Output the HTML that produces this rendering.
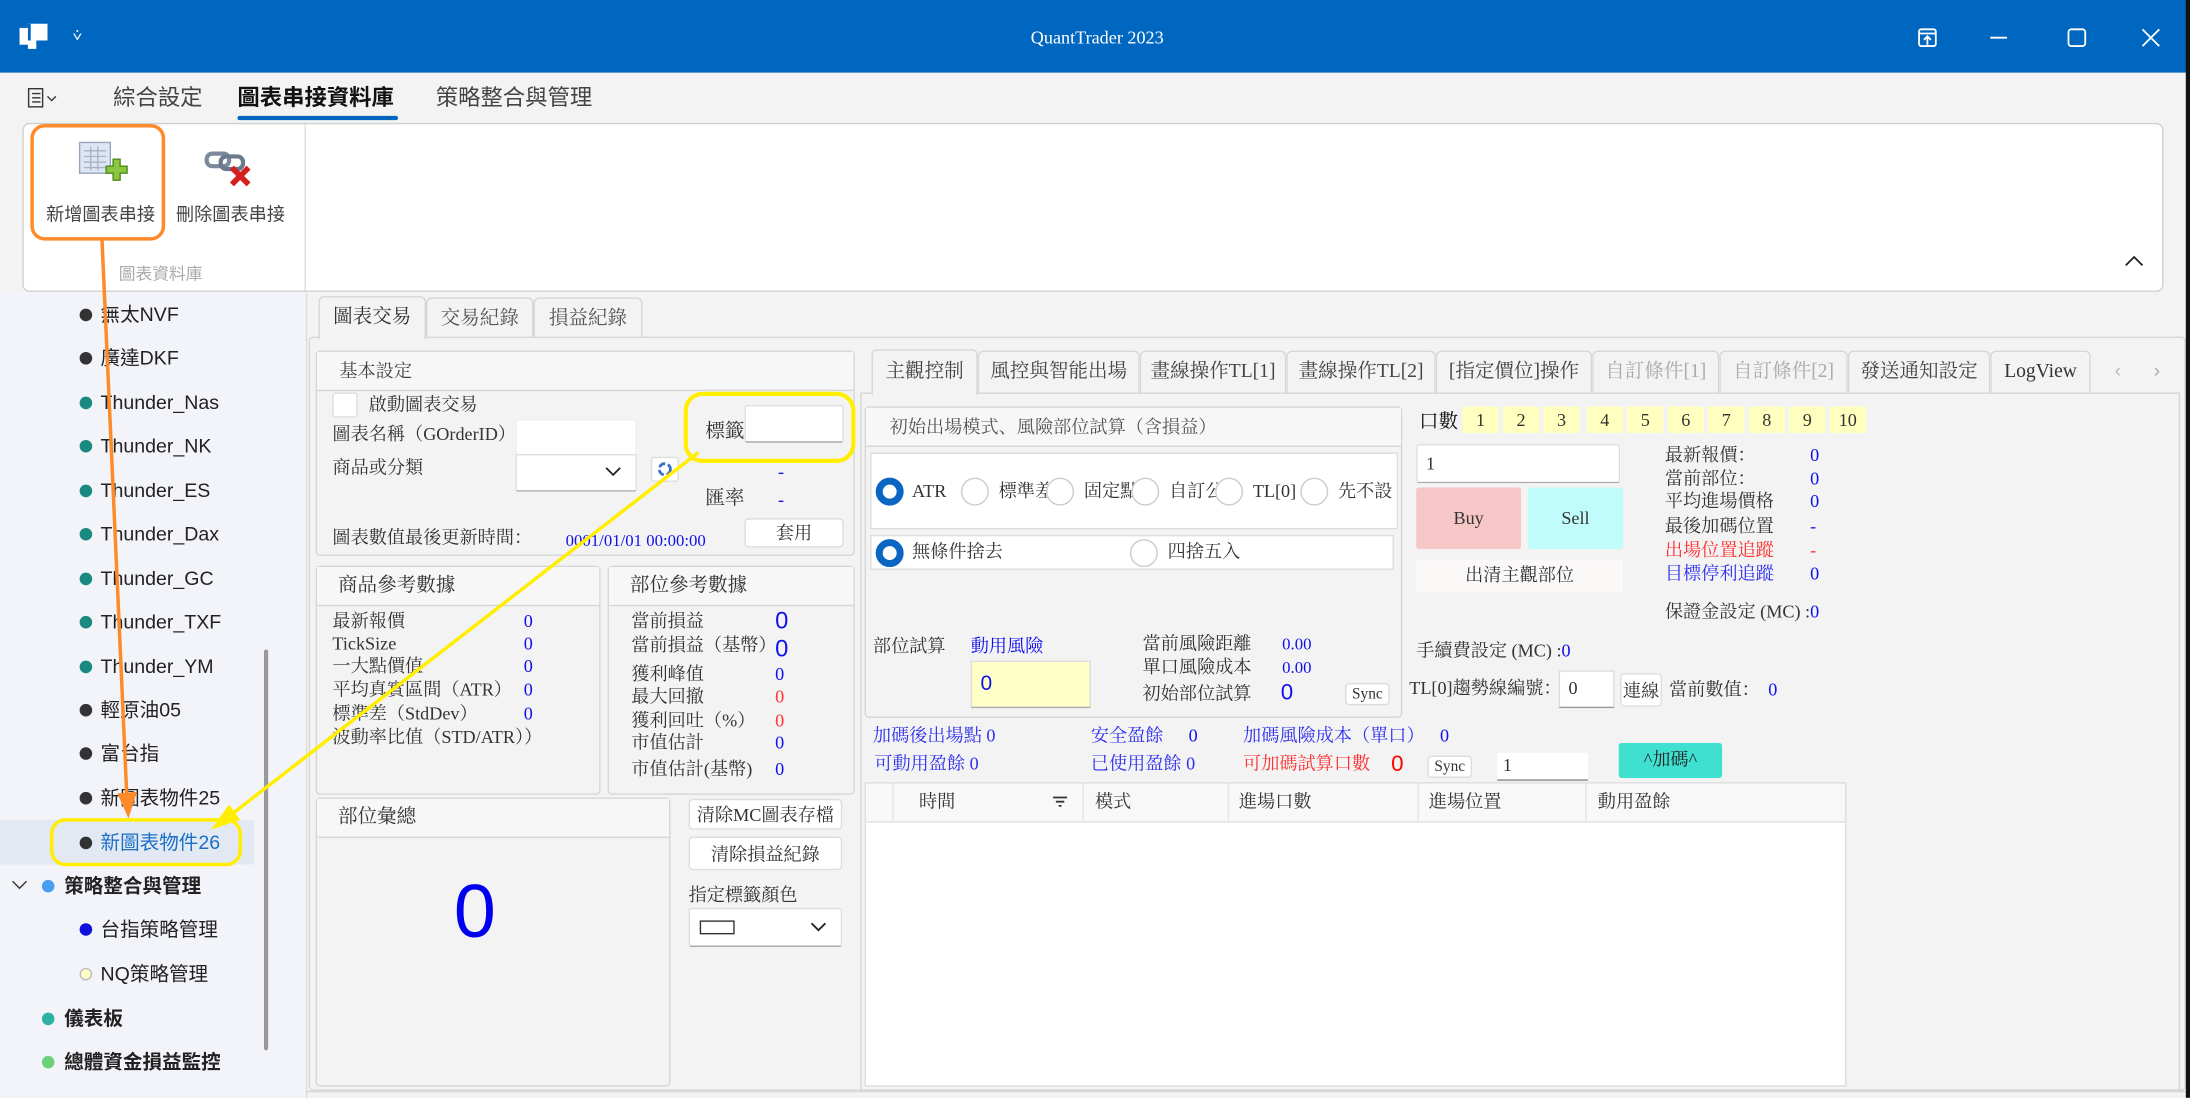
<!DOCTYPE html>
<html><head><meta charset="utf-8"><style>
*{box-sizing:border-box;margin:0;padding:0}
html,body{width:2190px;height:1098px;overflow:hidden;background:#f3f3f3}
#s{position:absolute;left:0;top:0;width:1568px;height:786px;transform:scale(1.39668);transform-origin:0 0;font-family:"Liberation Serif","Noto Serif CJK SC",serif;font-size:13px;color:#333;background:#f3f3f3}
#s div,#s span{position:absolute;white-space:nowrap}
.t{line-height:16px}
.sans{font-family:"Liberation Sans","Noto Sans CJK TC",sans-serif}
.box{border:1px solid #d6d6d6;border-radius:3px}
.hdr{border-bottom:1px solid #d6d6d6;background:#f7f7f7}
.b{color:#1010ee}.r{color:#ff3030}
.btn{background:#fff;border:1px solid #ddd;border-radius:3px;text-align:center}
.dot{width:9px;height:9px;border-radius:50%;background:#333}
.side{font-family:"Liberation Sans","Noto Sans CJK TC",sans-serif;font-size:14px;color:#222;line-height:18px}
.tab{border:1px solid #d6d6d6;border-bottom:none;border-radius:4px 4px 0 0;background:#f3f3f3;text-align:center;line-height:30px;font-size:14px}
.rad{width:20px;height:20px;border-radius:50%;border:1.5px solid #ccc;background:#fff}
.rad.on{border:5px solid #0a66c2}
.num{width:26px;height:19px;background:#ffffc0;text-align:center;line-height:19px;top:291px;font-size:13px}
</style></head><body><div id="s">
<!-- title bar -->
<div style="left:0;top:0;width:1568px;height:52px;background:#0067c0"></div>
<div style="left:14px;top:20px;width:10px;height:12px;background:#fff"></div>
<div style="left:20px;top:17px;width:14px;height:12px;background:#fff;border-left:2px solid #0067c0"></div>
<div style="left:20px;top:29px;width:6px;height:6px;background:#fff"></div>
<div class="t sans" style="left:52px;top:18px;color:#fff;font-size:11px">⩒</div>
<div class="t" style="left:738px;top:19px;color:#fff;font-size:13px">QuantTrader 2023</div>
<svg style="position:absolute;left:1370px;top:18px" width="180" height="20" viewBox="0 0 180 20"><g stroke="#fff" stroke-width="1.3" fill="none"><rect x="4" y="3" width="12" height="12" rx="1.5"/><line x1="4" y1="6" x2="16" y2="6"/><path d="M10 14V8M7.5 10.5L10 8l2.5 2.5"/><line x1="55" y1="9" x2="67" y2="9"/><rect x="111" y="3" width="12" height="12" rx="2"/><path d="M164 3l12 12M176 3l-12 12"/></g></svg>
<!-- menu -->
<svg style="position:absolute;left:19px;top:62px" width="24" height="16"><g stroke="#333" fill="none"><rect x="1.5" y="1.5" width="10" height="13"/><line x1="4" y1="5" x2="10" y2="5"/><line x1="4" y1="8" x2="10" y2="8"/><line x1="4" y1="11" x2="10" y2="11"/></g><path d="M15 7l3 3 3-3" stroke="#333" fill="none"/></svg>
<div class="t sans" style="left:81px;top:61px;font-size:16px;line-height:20px;color:#444">綜合設定</div>
<div class="t sans" style="left:170px;top:61px;font-size:16px;line-height:20px;color:#111;font-weight:bold">圖表串接資料庫</div>
<div style="left:170px;top:83px;width:115px;height:3px;background:#0067c0;border-radius:2px"></div>
<div class="t sans" style="left:312px;top:61px;font-size:16px;line-height:20px;color:#444">策略整合與管理</div>
<!-- ribbon -->
<div style="left:16px;top:88px;width:1533px;height:121px;background:#fff;border:1px solid #d0d0d0;border-radius:5px"></div>
<div style="left:218px;top:89px;width:1px;height:119px;background:#ddd"></div>
<svg style="position:absolute;left:56px;top:100px" width="36" height="36"><rect x="1" y="2" width="22" height="22" fill="#dde6f4" stroke="#9aa6b8"/><g stroke="#a8b4c8"><line x1="4" y1="8" x2="20" y2="8"/><line x1="4" y1="12" x2="20" y2="12"/><line x1="4" y1="16" x2="20" y2="16"/><line x1="4" y1="20" x2="20" y2="20"/><line x1="9" y1="5" x2="9" y2="22"/><line x1="14" y1="5" x2="14" y2="22"/></g><path d="M20 19h5v-5h5v5h5v5h-5v5h-5v-5h-5z" fill="#8cc63f" stroke="#4e8a1a"/></svg>
<svg style="position:absolute;left:146px;top:106px" width="36" height="28"><rect x="2" y="4" width="16" height="9" rx="4" fill="none" stroke="#7a8a9a" stroke-width="3"/><rect x="12" y="6" width="16" height="9" rx="4" fill="none" stroke="#6a7a8a" stroke-width="3"/><path d="M20 14l12 12M32 14L20 26" stroke="#d62020" stroke-width="4"/></svg>
<div class="t sans" style="left:33px;top:146px;font-size:13px;color:#444">新增圖表串接</div>
<div class="t sans" style="left:126px;top:146px;font-size:13px;color:#444">刪除圖表串接</div>
<div class="t sans" style="left:85px;top:188px;font-size:12px;color:#aaa">圖表資料庫</div>
<svg style="position:absolute;left:1521px;top:182px" width="14" height="10"><path d="M1 8l6-6 6 6" stroke="#222" stroke-width="1.3" fill="none"/></svg>
<!-- sidebar -->
<div style="left:0;top:210px;width:218px;height:576px;background:#f3f4f9"></div>
<div style="left:0;top:587px;width:182px;height:32px;background:#e3e9f2"></div>
<div style="left:189px;top:465px;width:3px;height:287px;background:#999;border-radius:2px"></div>
<div class="dot" style="left:57px;top:221px"></div><div class="side" style="left:72px;top:216px">無太NVF</div>
<div class="dot" style="left:57px;top:252px"></div><div class="side" style="left:72px;top:247px">廣達DKF</div>
<div class="dot" style="left:57px;top:284px;background:#1a8a80"></div><div class="side" style="left:72px;top:279px">Thunder_Nas</div>
<div class="dot" style="left:57px;top:315px;background:#1a8a80"></div><div class="side" style="left:72px;top:310px">Thunder_NK</div>
<div class="dot" style="left:57px;top:347px;background:#1a8a80"></div><div class="side" style="left:72px;top:342px">Thunder_ES</div>
<div class="dot" style="left:57px;top:378px;background:#1a8a80"></div><div class="side" style="left:72px;top:373px">Thunder_Dax</div>
<div class="dot" style="left:57px;top:410px;background:#1a8a80"></div><div class="side" style="left:72px;top:405px">Thunder_GC</div>
<div class="dot" style="left:57px;top:441px;background:#1a8a80"></div><div class="side" style="left:72px;top:436px">Thunder_TXF</div>
<div class="dot" style="left:57px;top:473px;background:#1a8a80"></div><div class="side" style="left:72px;top:468px">Thunder_YM</div>
<div class="dot" style="left:57px;top:504px"></div><div class="side" style="left:72px;top:499px">輕原油05</div>
<div class="dot" style="left:57px;top:535px"></div><div class="side" style="left:72px;top:530px">富台指</div>
<div class="dot" style="left:57px;top:567px"></div><div class="side" style="left:72px;top:562px">新圖表物件25</div>
<div class="dot" style="left:57px;top:599px"></div><div class="side" style="left:72px;top:594px;color:#1a6fc8">新圖表物件26</div>
<svg style="position:absolute;left:8px;top:629px" width="12" height="10"><path d="M1 2l5 5 5-5" stroke="#333" fill="none"/></svg>
<div class="dot" style="left:30px;top:630px;background:#4a9ef0"></div><div class="side" style="left:46px;top:625px;font-weight:bold">策略整合與管理</div>
<div class="dot" style="left:57px;top:661px;background:#1010dd"></div><div class="side" style="left:72px;top:656px">台指策略管理</div>
<div class="dot" style="left:57px;top:693px;background:#ffffc8;border:1px solid #bbb"></div><div class="side" style="left:72px;top:688px">NQ策略管理</div>
<div class="dot" style="left:30px;top:725px;background:#30b0a0"></div><div class="side" style="left:46px;top:720px;font-weight:bold">儀表板</div>
<div class="dot" style="left:30px;top:756px;background:#6cd07a"></div><div class="side" style="left:46px;top:751px;font-weight:bold">總體資金損益監控</div>
<!-- main tabs -->
<div style="left:219px;top:210px;width:1px;height:576px;background:#ddd"></div>
<div class="tab" style="left:305px;top:213px;width:77px;height:29px;color:#555">交易紀錄</div>
<div class="tab" style="left:382px;top:213px;width:78px;height:29px;color:#555">損益紀錄</div>
<div style="left:221px;top:241px;width:1344px;height:540px;border:1px solid #d6d6d6;border-radius:3px"></div>
<div class="tab" style="left:228px;top:212px;width:77px;height:31px;color:#333;background:#f3f3f3">圖表交易</div>
<!-- basic settings -->
<div class="box" style="left:226px;top:251px;width:386px;height:147px;background:#f3f3f3"></div>
<div class="hdr" style="left:227px;top:252px;width:384px;height:28px"></div>
<div class="t" style="left:243px;top:258px;font-size:13px;color:#444">基本設定</div>
<div style="left:238px;top:281px;width:18px;height:18px;background:#fff;border:1px solid #ddd;border-radius:2px"></div>
<div class="t" style="left:264px;top:282px">啟動圖表交易</div>
<div class="t" style="left:238px;top:303px">圖表名稱（GOrderID）</div>
<div style="left:369px;top:300px;width:87px;height:26px;background:#fff;border:1px solid #eee"></div>
<div class="t" style="left:238px;top:327px">商品或分類</div>
<div style="left:369px;top:325px;width:87px;height:27px;background:#fff;border:1px solid #ddd;border-bottom:1px solid #aaa;border-radius:2px"></div>
<svg style="position:absolute;left:433px;top:334px" width="12" height="8"><path d="M1 1l5 5 5-5" stroke="#222" stroke-width="1.3" fill="none"/></svg>
<div style="left:466px;top:327px;width:20px;height:18px;background:#fff;border:1px solid #ddd;border-radius:2px"></div>
<svg style="position:absolute;left:470px;top:330px" width="12" height="12"><circle cx="6" cy="6" r="4" fill="none" stroke="#3a70c8" stroke-width="2" stroke-dasharray="5 2"/></svg>
<div class="t" style="left:505px;top:302px;font-size:14px">標籤</div>
<div style="left:533px;top:290px;width:71px;height:27px;background:#fff;border:1px solid #ddd;border-bottom:1px solid #999;border-radius:2px"></div>
<div class="t b" style="left:557px;top:330px">-</div>
<div class="t" style="left:505px;top:350px;font-size:14px">匯率</div>
<div class="t b" style="left:557px;top:350px">-</div>
<div class="t" style="left:238px;top:377px">圖表數值最後更新時間：</div>
<div class="t b" style="left:405px;top:379px;font-size:12px">0001/01/01 00:00:00</div>
<div class="btn t" style="left:533px;top:371px;width:71px;height:21px;line-height:20px">套用</div>
<!-- product data -->
<div class="box" style="left:226px;top:405px;width:204px;height:164px"></div>
<div class="hdr" style="left:227px;top:406px;width:202px;height:28px"></div>
<div class="t" style="left:242px;top:412px;font-size:14px">商品參考數據</div>
<div class="t" style="left:238px;top:437px">最新報價</div><div class="t b" style="left:375px;top:437px">0</div>
<div class="t" style="left:238px;top:453px">TickSize</div><div class="t b" style="left:375px;top:453px">0</div>
<div class="t" style="left:238px;top:469px">一大點價值</div><div class="t b" style="left:375px;top:469px">0</div>
<div class="t" style="left:238px;top:486px">平均真實區間（ATR）</div><div class="t b" style="left:375px;top:486px">0</div>
<div class="t" style="left:238px;top:503px">標準差（StdDev）</div><div class="t b" style="left:375px;top:503px">0</div>
<div class="t" style="left:238px;top:520px">波動率比值（STD/ATR））</div>
<!-- position data -->
<div class="box" style="left:435px;top:405px;width:177px;height:164px"></div>
<div class="hdr" style="left:436px;top:406px;width:175px;height:28px"></div>
<div class="t" style="left:451px;top:412px;font-size:14px">部位參考數據</div>
<div class="t" style="left:452px;top:437px">當前損益</div><div class="t b" style="left:555px;top:437px;font-size:17px;font-family:'Liberation Sans',sans-serif">0</div>
<div class="t" style="left:452px;top:454px">當前損益（基幣）</div><div class="t b" style="left:555px;top:457px;font-size:17px;font-family:'Liberation Sans',sans-serif">0</div>
<div class="t" style="left:452px;top:475px">獲利峰值</div><div class="t b" style="left:555px;top:475px">0</div>
<div class="t" style="left:452px;top:491px">最大回撤</div><div class="t r" style="left:555px;top:491px">0</div>
<div class="t" style="left:452px;top:508px">獲利回吐（%）</div><div class="t r" style="left:555px;top:508px">0</div>
<div class="t" style="left:452px;top:524px">市值估計</div><div class="t b" style="left:555px;top:524px">0</div>
<div class="t" style="left:452px;top:543px">市值估計(基幣)</div><div class="t b" style="left:555px;top:543px">0</div>
<!-- position summary -->
<div class="box" style="left:226px;top:571px;width:254px;height:207px"></div>
<div class="hdr" style="left:227px;top:572px;width:252px;height:28px"></div>
<div class="t" style="left:242px;top:578px;font-size:14px">部位彙總</div>
<div style="left:325px;top:622px;font-size:54px;line-height:62px;color:#0000ee;font-family:'Liberation Sans',sans-serif">0</div>
<div class="btn t" style="left:493px;top:572px;width:110px;height:22px;line-height:21px">清除MC圖表存檔</div>
<div class="btn t" style="left:493px;top:599px;width:110px;height:24px;line-height:23px">清除損益紀錄</div>
<div class="t" style="left:493px;top:633px">指定標籤顏色</div>
<div style="left:493px;top:650px;width:110px;height:28px;background:#fff;border:1px solid #ddd;border-bottom:1px solid #aaa;border-radius:2px"></div>
<div style="left:501px;top:659px;width:25px;height:10px;border:1px solid #333"></div>
<svg style="position:absolute;left:580px;top:660px" width="12" height="8"><path d="M1 1l5 5 5-5" stroke="#222" stroke-width="1.3" fill="none"/></svg>
<!-- right tabs -->
<div class="tab" style="left:700px;top:251px;width:116px;height:31px;color:#444">風控與智能出場</div>
<div class="tab" style="left:816px;top:251px;width:105px;height:31px;color:#444">畫線操作TL[1]</div>
<div class="tab" style="left:921px;top:251px;width:107px;height:31px;color:#444">畫線操作TL[2]</div>
<div class="tab" style="left:1028px;top:251px;width:112px;height:31px;color:#444">[指定價位]操作</div>
<div class="tab" style="left:1140px;top:251px;width:91px;height:31px;color:#aaa">自訂條件[1]</div>
<div class="tab" style="left:1231px;top:251px;width:92px;height:31px;color:#aaa">自訂條件[2]</div>
<div class="tab" style="left:1323px;top:251px;width:102px;height:31px;color:#444">發送通知設定</div>
<div class="tab" style="left:1425px;top:251px;width:72px;height:31px;color:#333">LogView</div>
<div class="t sans" style="left:1514px;top:257px;color:#bbb;font-size:14px">‹</div>
<div class="t sans" style="left:1542px;top:257px;color:#aaa;font-size:14px">›</div>
<div style="left:616px;top:281px;width:945px;height:500px;border:1px solid #d6d6d6"></div>
<div class="tab" style="left:624px;top:250px;width:76px;height:33px;color:#444;background:#f3f3f3;line-height:32px">主觀控制</div>
<!-- initial exit panel -->
<div class="box" style="left:619px;top:291px;width:385px;height:223px"></div>
<div class="hdr" style="left:620px;top:292px;width:383px;height:28px"></div>
<div class="t" style="left:637px;top:298px;color:#555">初始出場模式、風險部位試算（含損益）</div>
<div style="left:623px;top:324px;width:378px;height:55px;background:#fff;border:1px solid #ddd"></div>
<div class="rad on" style="left:627px;top:342px"></div><div class="t" style="left:653px;top:344px">ATR</div>
<div class="rad" style="left:688px;top:342px"></div><div class="t" style="left:715px;top:344px">標準差</div>
<div class="rad" style="left:749px;top:342px"></div><div class="t" style="left:776px;top:344px">固定點</div>
<div class="rad" style="left:810px;top:342px"></div><div class="t" style="left:837px;top:344px">自訂公</div>
<div class="rad" style="left:870px;top:342px"></div><div class="t" style="left:897px;top:344px">TL[0]</div>
<div class="rad" style="left:931px;top:342px"></div><div class="t" style="left:958px;top:344px">先不設</div>
<div style="left:623px;top:383px;width:375px;height:25px;background:#fff;border:1px solid #ddd"></div>
<div class="rad on" style="left:627px;top:386px"></div><div class="t" style="left:653px;top:387px">無條件捨去</div>
<div class="rad" style="left:809px;top:386px"></div><div class="t" style="left:836px;top:387px">四捨五入</div>
<div class="t" style="left:625px;top:455px">部位試算</div>
<div class="t b" style="left:695px;top:455px">動用風險</div>
<div style="left:695px;top:473px;width:86px;height:34px;background:#ffffc8;border:1px solid #ddd;border-bottom:1px solid #aaa"></div>
<div class="t b" style="left:702px;top:482px;font-size:15px;font-family:'Liberation Sans',sans-serif">0</div>
<div class="t" style="left:818px;top:453px">當前風險距離</div><div class="t b" style="left:918px;top:453px;font-size:12px">0.00</div>
<div class="t" style="left:818px;top:470px">單口風險成本</div><div class="t b" style="left:918px;top:470px;font-size:12px">0.00</div>
<div class="t" style="left:818px;top:489px">初始部位試算</div><div class="t b" style="left:917px;top:489px;font-size:16px;font-family:'Liberation Sans',sans-serif">0</div>
<div class="btn t" style="left:963px;top:489px;width:32px;height:16px;line-height:15px;font-size:11px">Sync</div>
<!-- lots -->
<div class="t" style="left:1016px;top:295px;font-size:14px;color:#111">口數</div>
<div class="num" style="left:1047px">1</div><div class="num" style="left:1076px">2</div><div class="num" style="left:1105px">3</div><div class="num" style="left:1136px">4</div><div class="num" style="left:1165px">5</div><div class="num" style="left:1194px">6</div><div class="num" style="left:1223px">7</div><div class="num" style="left:1252px">8</div><div class="num" style="left:1281px">9</div><div class="num" style="left:1310px">10</div>
<div style="left:1014px;top:318px;width:146px;height:28px;background:#fff;border:1px solid #ddd;border-bottom:1px solid #aaa;border-radius:2px"></div>
<div class="t" style="left:1021px;top:324px">1</div>
<div style="left:1014px;top:349px;width:75px;height:44px;background:#f7c6c6;text-align:center;line-height:44px;border-radius:2px">Buy</div>
<div style="left:1094px;top:349px;width:68px;height:44px;background:#c0fcfc;text-align:center;line-height:44px;border-radius:2px">Sell</div>
<div style="left:1014px;top:401px;width:148px;height:23px;background:#fbf8f8;text-align:center;line-height:22px;font-size:13px">出清主觀部位</div>
<div class="t" style="left:1192px;top:318px">最新報價：</div><div class="t b" style="left:1296px;top:318px">0</div>
<div class="t" style="left:1192px;top:335px">當前部位：</div><div class="t b" style="left:1296px;top:335px">0</div>
<div class="t" style="left:1192px;top:351px">平均進場價格</div><div class="t b" style="left:1296px;top:351px">0</div>
<div class="t" style="left:1192px;top:369px">最後加碼位置</div><div class="t b" style="left:1296px;top:369px">-</div>
<div class="t r" style="left:1192px;top:386px">出場位置追蹤</div><div class="t r" style="left:1296px;top:386px">-</div>
<div class="t" style="left:1192px;top:403px;color:#3030ee">目標停利追蹤</div><div class="t b" style="left:1296px;top:403px">0</div>
<div class="t" style="left:1192px;top:430px">保證金設定 (MC) :<span class="b" style="position:static">0</span></div>
<div class="t" style="left:1014px;top:458px">手續費設定 (MC) :<span class="b" style="position:static">0</span></div>
<div class="t" style="left:1009px;top:485px">TL[0]趨勢線編號：</div>
<div style="left:1116px;top:480px;width:40px;height:27px;background:#fff;border:1px solid #ddd;border-bottom:1px solid #999"></div>
<div class="t" style="left:1123px;top:485px">0</div>
<div class="btn t" style="left:1160px;top:482px;width:30px;height:24px;line-height:23px">連線</div>
<div class="t" style="left:1195px;top:486px">當前數值：</div><div class="t b" style="left:1266px;top:486px">0</div>
<!-- add position rows -->
<div class="t" style="left:625px;top:519px;color:#3030ee">加碼後出場點 0</div>
<div class="t" style="left:781px;top:519px;color:#3030ee">安全盈餘</div><div class="t b" style="left:851px;top:519px">0</div>
<div class="t" style="left:890px;top:519px;color:#3030ee">加碼風險成本（單口）</div><div class="t b" style="left:1031px;top:519px">0</div>
<div class="t" style="left:626px;top:539px;color:#3030ee">可動用盈餘 0</div>
<div class="t" style="left:781px;top:539px;color:#3030ee">已使用盈餘 0</div>
<div class="t r" style="left:890px;top:539px">可加碼試算口數</div><div class="t" style="left:996px;top:540px;color:#f00;font-size:16px;font-family:'Liberation Sans',sans-serif">0</div>
<div class="btn t" style="left:1022px;top:541px;width:32px;height:16px;line-height:15px;font-size:11px">Sync</div>
<div style="left:1072px;top:539px;width:65px;height:20px;background:#fff;border-bottom:1px solid #888"></div>
<div class="t" style="left:1076px;top:540px">1</div>
<div style="left:1159px;top:532px;width:74px;height:25px;background:#40e0d0;border-radius:2px;text-align:center;line-height:24px;color:#222">^加碼^</div>
<!-- grid -->
<div style="left:619px;top:560px;width:703px;height:218px;background:#fff;border:1px solid #ddd"></div>
<div style="left:620px;top:561px;width:701px;height:28px;background:#f8f8f8;border-bottom:1px solid #e0e0e0"></div>
<div style="left:639px;top:561px;width:1px;height:28px;background:#e4e4e4"></div>
<div style="left:775px;top:561px;width:1px;height:28px;background:#e4e4e4"></div>
<div style="left:879px;top:561px;width:1px;height:28px;background:#e4e4e4"></div>
<div style="left:1015px;top:561px;width:1px;height:28px;background:#e4e4e4"></div>
<div style="left:1135px;top:561px;width:1px;height:28px;background:#e4e4e4"></div>
<div class="t" style="left:658px;top:566px">時間</div>
<svg style="position:absolute;left:753px;top:569px" width="12" height="10"><path d="M1 2h10M3 5h6M5 8h2" stroke="#333" stroke-width="1.3"/></svg>
<div class="t" style="left:784px;top:566px">模式</div>
<div class="t" style="left:887px;top:566px">進場口數</div>
<div class="t" style="left:1023px;top:566px">進場位置</div>
<div class="t" style="left:1144px;top:566px">動用盈餘</div>
<div style="left:219px;top:781px;width:1346px;height:1px;background:#d6d6d6"></div>
<div style="left:1565px;top:0;width:3px;height:786px;background:#111"></div>
<!-- annotations -->
<svg style="position:absolute;left:0;top:0" width="1568" height="786">
<rect x="23" y="90" width="94" height="81" rx="9" fill="none" stroke="#ff8a2a" stroke-width="2.5"/>
<line x1="73" y1="171" x2="91" y2="575" stroke="#ff8a2a" stroke-width="2.5"/>
<path d="M84 568L92 586L98 567Z" fill="#ff8a2a"/>
<rect x="491" y="282" width="120" height="48" rx="12" fill="none" stroke="#ffee00" stroke-width="3"/>
<line x1="500" y1="324" x2="162" y2="586" stroke="#ffee00" stroke-width="2.5"/>
<path d="M151 594L164 576L172 587Z" fill="#ffee00"/>
<rect x="37" y="587" width="135" height="32" rx="10" fill="none" stroke="#ffee00" stroke-width="2.5"/>
</svg>
</div></body></html>
